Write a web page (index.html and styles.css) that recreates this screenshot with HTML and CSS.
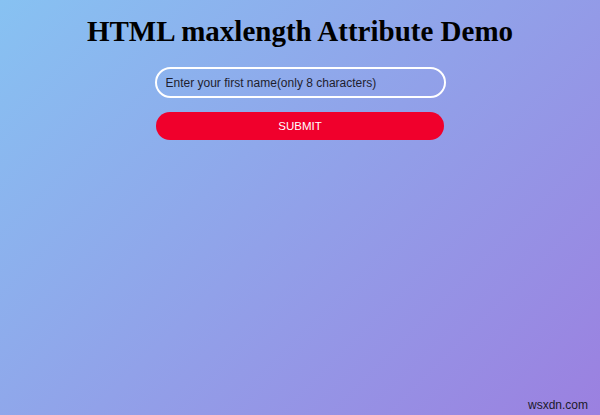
FILE: index.html
```html
<!DOCTYPE html>
<html>
<head>
<meta charset="utf-8">
<link rel="stylesheet" href="styles.css">
</head>
<body>
<main class="page">
  <h1 class="title">HTML maxlength Attribute Demo</h1>
  <form class="form">
    <input class="field" type="text" maxlength="8" placeholder="Enter your first name(only 8 characters)">
    <button class="submit" type="button">SUBMIT</button>
  </form>
</main>
<div class="mark">wsxdn.com</div>
</body>
</html>
```
FILE: styles.css
```css
html, body {
  margin: 0;
  padding: 0;
  height: 100%;
}
body {
  background: linear-gradient(135deg, #87c2f2 0%, #9b80e0 100%);
  font-family: "Liberation Sans", Arial, sans-serif;
  position: relative;
  overflow: hidden;
}
.page {
  display: flex;
  flex-direction: column;
  align-items: center;
  padding-top: 14px;
}
.title {
  margin: 0;
  font-family: "Liberation Serif", "Times New Roman", serif;
  font-weight: bold;
  font-size: 29px;
  line-height: 34px;
  color: #000;
}
.form {
  display: flex;
  flex-direction: column;
  align-items: center;
  margin-top: 19px;
  gap: 14px;
}
.field {
  box-sizing: border-box;
  width: 291px;
  height: 31px;
  border: 2px solid #ffffff;
  border-radius: 16px;
  background: transparent;
  padding: 0 9px;
  font-family: "Liberation Sans", Arial, sans-serif;
  font-size: 12px;
  color: #1e1e2e;
  outline: none;
}
.field::placeholder {
  color: #1e1e2e;
  opacity: 1;
}
.submit {
  box-sizing: border-box;
  width: 288px;
  height: 28px;
  border: none;
  border-radius: 14px;
  background: #f0002c;
  color: #ffffff;
  font-family: "Liberation Sans", Arial, sans-serif;
  font-size: 11.5px;
  padding: 0;
}
.mark {
  position: absolute;
  right: 12px;
  bottom: 3px;
  font-family: "Liberation Sans", Arial, sans-serif;
  font-size: 12px;
  color: #1a1a2a;
}
```
